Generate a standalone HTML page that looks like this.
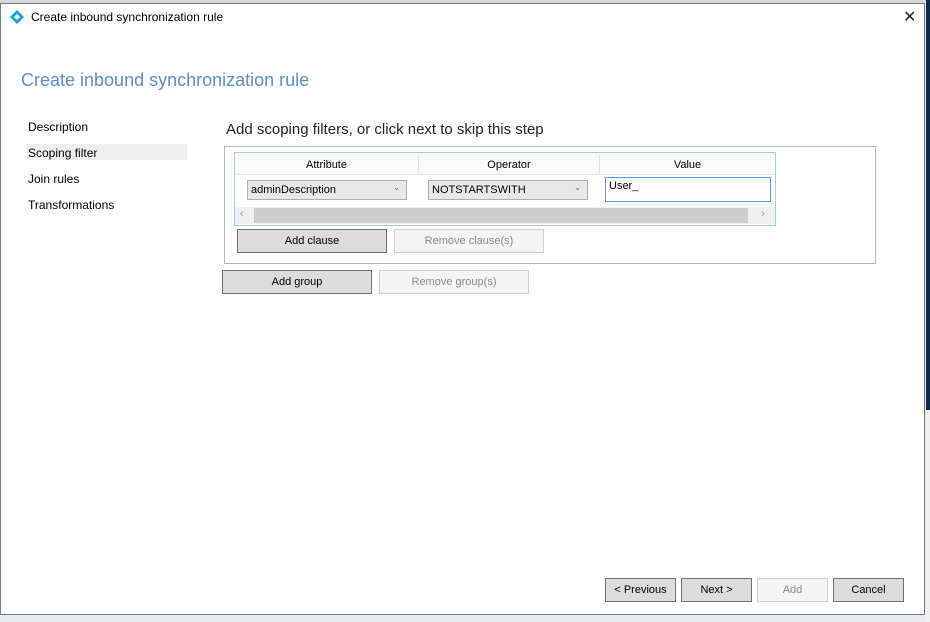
<!DOCTYPE html>
<html><head><style>
body{margin:0;width:930px;height:617px;overflow:hidden;background:#e8eaee;font-family:"Liberation Sans",sans-serif;position:relative}
.win{position:absolute;left:0;top:3px;width:925px;height:612px;background:#fff;border:1px solid #7a7a7a;box-sizing:border-box}
.abs{position:absolute}
.t{font-size:12px;color:#000}
.btn{position:absolute;box-sizing:border-box;border:1px solid #adadad;background:#e1e1e1;font-size:11px;text-align:center;color:#000}
.dis{background:#f4f4f4;border-color:#cfcfcf;color:#8a8a8a}
.dark{background:#dcdcdc;border-color:#707070}
</style></head><body>
<div class="abs" style="left:0;top:0;width:930px;height:3px;background:#d8d8d8"></div>
<div class="abs" style="left:926px;top:0;width:4px;height:617px;background:#0d2b4d"></div>
<div class="abs" style="left:926px;top:410px;width:4px;height:212px;background:#f0f0f0"></div>
<div class="win">
<svg class="abs" style="left:9px;top:6px" width="14" height="14" viewBox="0 0 14 14"><path d="M7 0L14 7L7 14L0 7Z" fill="#1ba1e2"/><path d="M7 4L10 7L7 10L4 7Z" fill="#fff"/></svg>
<div class="abs t" style="left:30px;top:6px;font-size:12px">Create inbound synchronization rule</div>
<div class="abs" style="left:902px;top:3px;font-size:16px;color:#222">✕</div>
<div class="abs" style="left:20px;top:66px;font-size:18px;color:#5b8fc9">Create inbound synchronization rule</div>
<div class="abs" style="left:26px;top:140px;width:160px;height:16px;background:#efefef"></div>
<div class="abs t" style="left:27px;top:116px">Description</div>
<div class="abs t" style="left:27px;top:142px">Scoping filter</div>
<div class="abs t" style="left:27px;top:168px">Join rules</div>
<div class="abs t" style="left:27px;top:194px">Transformations</div>
<div class="abs" style="left:225px;top:117px;font-size:15px;color:#222">Add scoping filters, or click next to skip this step</div>
<div class="abs" style="left:223px;top:142px;width:652px;height:118px;border:1px solid #b5b5b5;box-sizing:border-box"></div>
<div class="abs" style="left:233px;top:148px;width:542px;height:74px;border:1px solid #a9c9e8;box-sizing:border-box;background:#fff"></div>
<div class="abs" style="left:234px;top:149px;width:540px;height:21px;background:#fafafa;border-bottom:1px solid #e4e4e4"></div>
<div class="abs" style="left:417px;top:151px;width:1px;height:18px;background:#e0e0e0"></div>
<div class="abs" style="left:598px;top:151px;width:1px;height:18px;background:#e0e0e0"></div>
<div class="abs" style="left:234px;top:155px;width:183px;text-align:center;font-size:11px">Attribute</div>
<div class="abs" style="left:418px;top:155px;width:180px;text-align:center;font-size:11px">Operator</div>
<div class="abs" style="left:599px;top:155px;width:175px;text-align:center;font-size:11px">Value</div>
<div class="abs" style="left:246px;top:176px;width:160px;height:20px;border:1px solid #adadad;background:#e8e8e8;box-sizing:border-box;font-size:11px;padding:3px 0 0 3px">adminDescription<span style="position:absolute;right:6px;top:2px;font-size:8px;color:#666">⌄</span></div>
<div class="abs" style="left:427px;top:176px;width:160px;height:20px;border:1px solid #adadad;background:#e8e8e8;box-sizing:border-box;font-size:11px;padding:3px 0 0 3px">NOTSTARTSWITH<span style="position:absolute;right:6px;top:2px;font-size:8px;color:#666">⌄</span></div>
<div class="abs" style="left:604px;top:173px;width:166px;height:25px;border:1px solid #5a9ad8;box-sizing:border-box;font-size:11px;padding:2px 0 0 3px">User_</div>
<div class="abs" style="left:234px;top:203px;width:540px;height:17px;background:#f0f0f0"></div>
<div class="abs" style="left:253px;top:204px;width:494px;height:15px;background:#cdcdcd"></div>
<div class="abs" style="left:239px;top:204px;font-size:11px;color:#999">‹</div>
<div class="abs" style="left:760px;top:204px;font-size:11px;color:#999">›</div>
<div class="btn dark" style="left:236px;top:225px;width:150px;height:24px;line-height:22px">Add clause</div>
<div class="btn dis" style="left:393px;top:225px;width:150px;height:24px;line-height:22px">Remove clause(s)</div>
<div class="btn dark" style="left:221px;top:266px;width:150px;height:24px;line-height:22px">Add group</div>
<div class="btn dis" style="left:378px;top:266px;width:150px;height:24px;line-height:22px">Remove group(s)</div>
<div class="btn dark" style="left:604px;top:574px;width:71px;height:24px;line-height:22px">&lt; Previous</div>
<div class="btn dark" style="left:680px;top:574px;width:71px;height:24px;line-height:22px">Next &gt;</div>
<div class="btn dis" style="left:756px;top:574px;width:71px;height:24px;line-height:22px">Add</div>
<div class="btn dark" style="left:832px;top:574px;width:71px;height:24px;line-height:22px">Cancel</div>
</div>
</body></html>
